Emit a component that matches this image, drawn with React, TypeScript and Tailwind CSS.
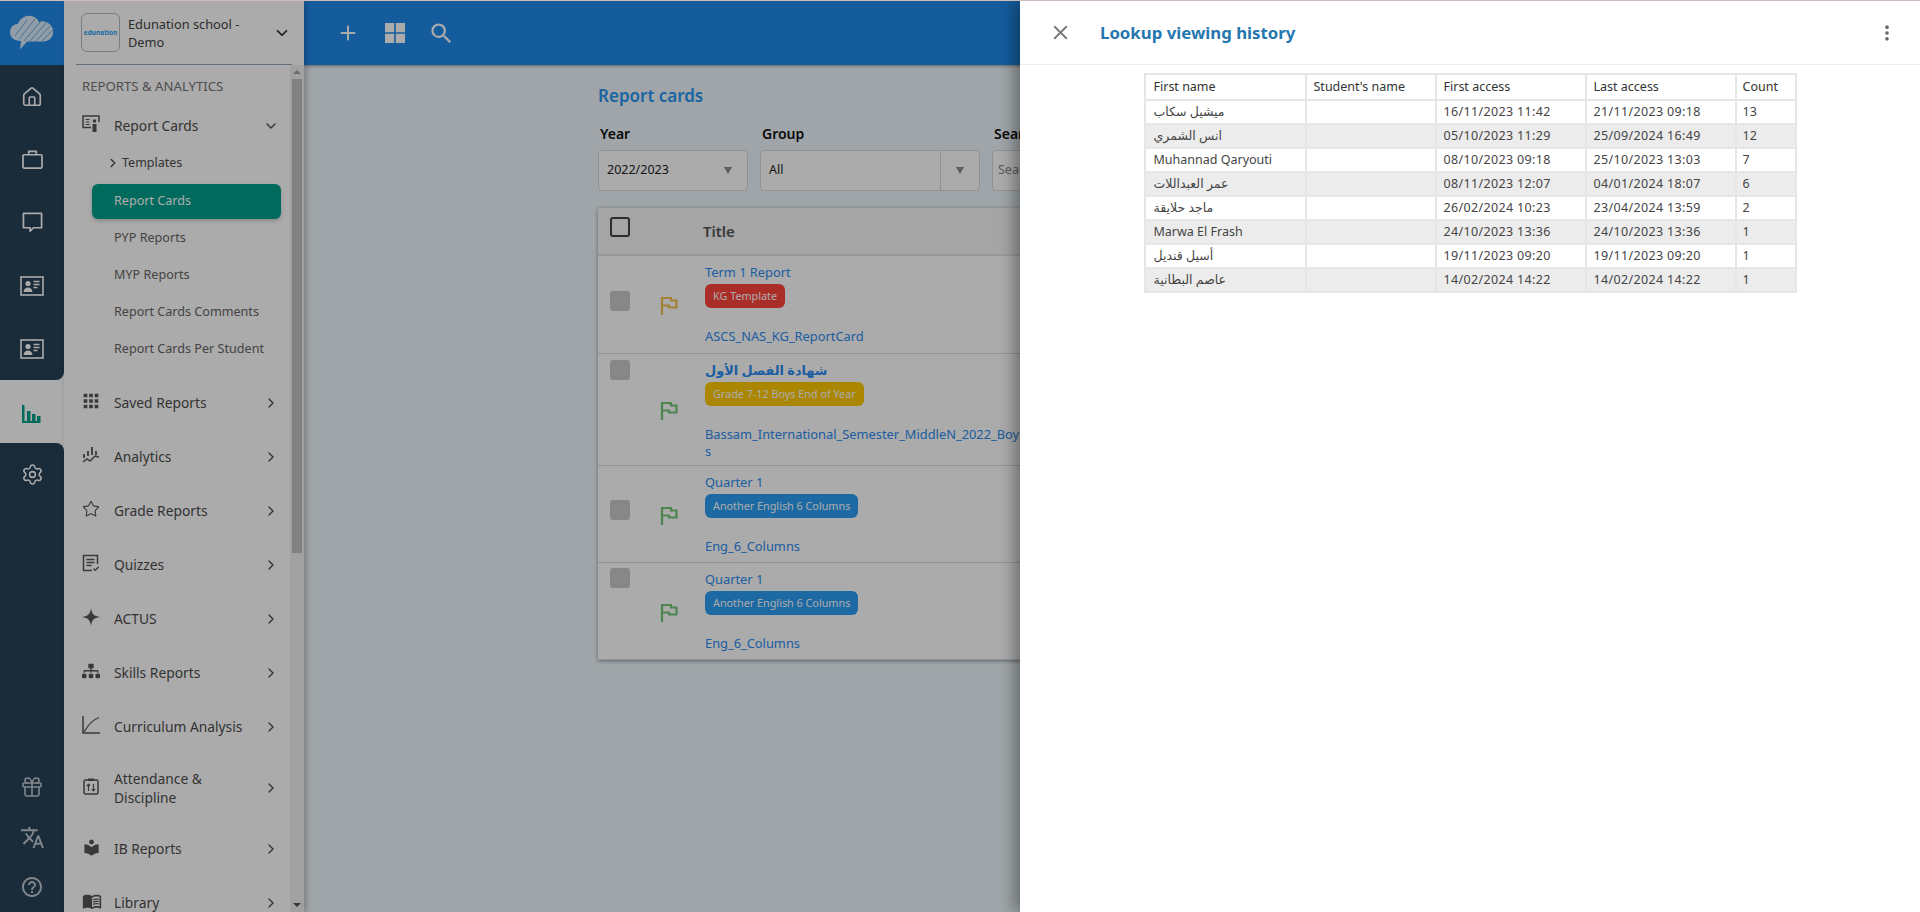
import { ChevronDown, ChevronRight, Plus, X, EllipsisVertical, House, Settings, Gift, Star } from "lucide-react";
import { MdTranslate, MdHelpOutline, MdApps, MdLocalLibrary, MdMenuBook, MdSearch } from "react-icons/md";
import { FaSitemap } from "react-icons/fa";
import type { ReactNode } from "react";

const font = "font-['Noto_Sans','DejaVu_Sans',sans-serif]";

function IdCard({ className }: { className?: string }) {
  return (
    <svg viewBox="0 0 24 20" className={className} fill="none">
      <rect x="1" y="1" width="22" height="18" stroke="currentColor" strokeWidth="1.6" />
      <circle cx="8" cy="7.5" r="2.6" fill="currentColor" />
      <path d="M3.5 16c.3-3 2-4.500 4.500-4.500s4.200 1.500 4.500 4.500z" fill="currentColor" />
      <path d="M13.500 5.500h6M13.500 8.500h6M13.500 11.500h4" stroke="currentColor" strokeWidth="1.300" />
    </svg>
  );
}

function CaseIcon({ className }: { className?: string }) {
  return (
    <svg viewBox="0 0 22 20" className={className} fill="none">
      <rect x="1" y="5" width="20" height="14" rx="1" stroke="currentColor" strokeWidth="1.800" />
      <path d="M7 5V1.500h8V5" stroke="currentColor" strokeWidth="1.800" />
    </svg>
  );
}

function ChatIcon({ className }: { className?: string }) {
  return (
    <svg viewBox="0 0 22 22" className={className} fill="none">
      <path d="M1.500 1.500h19v15H12l-3.500 3.500v-3.500h-7z" stroke="currentColor" strokeWidth="1.800" strokeLinejoin="round" />
    </svg>
  );
}

function HomeIcon({ className }: { className?: string }) {
  return <House className={className} strokeWidth={1.8} />;
}

function CloudLogo() {
  return (
    <svg viewBox="0 0 46 38" className="h-[38px] w-[46px]" fill="none">
      <path d="M12 27C5 27 1 23 1 18c0-5 4-8 8-8 2-6 8-9 13-8 4 .7 7 3 8 6 2-1 5-1 8 .5 4 2 7 6 6 11-.8 5-5 8-10 8H18l-7 8 1-8z" fill="#d9ecfb" />
      <path d="M6 22 18 6M10 25 26 5M15 27 32 7M21 27 37 9M27 27 41 12M33 27 44 16" stroke="#6fa8d8" strokeWidth="1" />
    </svg>
  );
}

function FlagIcon({ className }: { className?: string }) {
  return (
    <svg viewBox="0 0 18 19" className={className} fill="none">
      <path d="M2 19V2h9v2.500h5.500v7H9V9.500H2" stroke="currentColor" strokeWidth="2.200" />
    </svg>
  );
}

function ReportIcon() {
  return (
    <svg viewBox="0 0 18 18" className="h-[18px] w-[18px]" fill="none">
      <path d="M9 12.500H1V1h16v6" stroke="currentColor" strokeWidth="1.500" />
      <path d="M3.500 4.500h4M3.500 7h4M3.500 9.500h4" stroke="currentColor" strokeWidth="1.200" />
      <circle cx="12.500" cy="6" r="1.800" fill="currentColor" />
      <rect x="10.500" y="9" width="4" height="8" fill="currentColor" />
    </svg>
  );
}

function AnalyticsIcon() {
  return (
    <svg viewBox="0 0 18 18" className="h-[18px] w-[18px]" fill="none">
      <path d="M2 8v4M6 5v5M10 1v8M14 5v4" stroke="currentColor" strokeWidth="1.800" />
      <path d="M1 16l4-3 3 2 5-5 4 1" stroke="currentColor" strokeWidth="1.500" />
    </svg>
  );
}

function QuizIcon() {
  return (
    <svg viewBox="0 0 18 18" className="h-[18px] w-[18px]" fill="none">
      <path d="M10 16.500H1.500v-15h14V10" stroke="currentColor" strokeWidth="1.500" />
      <path d="M4.500 5.500h8M4.500 8.500h8M4.500 11.500h5" stroke="currentColor" strokeWidth="1.300" />
      <path d="M11.500 14.500l1.800 1.800 3.500-3.500" stroke="currentColor" strokeWidth="1.300" />
    </svg>
  );
}

function SparkIcon() {
  return (
    <svg viewBox="0 0 18 18" className="h-[18px] w-[18px]">
      <path d="M9 0c.6 5.500 2.500 8 9 9-6.500 1-8.400 3.500-9 9-.6-5.500-2.500-8-9-9 6.500-1 8.400-3.500 9-9z" fill="currentColor" />
    </svg>
  );
}

function CurveIcon() {
  return (
    <svg viewBox="0 0 18 18" className="h-[18px] w-[18px]" fill="none">
      <path d="M1 0v17h17" stroke="currentColor" strokeWidth="1.500" />
      <path d="M2 16C6 9 10 4 17 1.500" stroke="currentColor" strokeWidth="1.300" />
    </svg>
  );
}

function ClipIcon() {
  return (
    <svg viewBox="0 0 18 18" className="h-[18px] w-[18px]" fill="none">
      <rect x="2" y="3" width="14" height="14" rx="1.500" stroke="currentColor" strokeWidth="1.500" />
      <path d="M6 1.500h6V4H6z" fill="currentColor" />
      <path d="M6.500 14V7M4.800 8.800l1.700-1.800 1.700 1.800M11.500 7v7M9.800 12.200l1.700 1.800 1.700-1.800" stroke="currentColor" strokeWidth="1.200" />
    </svg>
  );
}

const topItems = [
  { Icon: HomeIcon, size: "h-[22px] w-[22px]" },
  { Icon: CaseIcon, size: "h-[19px] w-[21px]" },
  { Icon: ChatIcon, size: "h-[21px] w-[21px]" },
  { Icon: IdCard, size: "h-[20px] w-[24px]" },
  { Icon: IdCard, size: "h-[20px] w-[24px]" },
];

const navGroups: { label: ReactNode; icon: ReactNode; tall?: boolean }[] = [
  { label: "Saved Reports", icon: <MdApps size={22} className="-ml-0.5" /> },
  { label: "Analytics", icon: <AnalyticsIcon /> },
  { label: "Grade Reports", icon: <Star size={18} strokeWidth={1.5} /> },
  { label: "Quizzes", icon: <QuizIcon /> },
  { label: "ACTUS", icon: <SparkIcon /> },
  { label: "Skills Reports", icon: <FaSitemap size={18} /> },
  { label: "Curriculum Analysis", icon: <CurveIcon /> },
  { label: <>Attendance &amp;<br />Discipline</>, icon: <ClipIcon />, tall: true },
  { label: "IB Reports", icon: <MdLocalLibrary size={19} /> },
  { label: "Library", icon: <MdMenuBook size={20} /> },
];

const subItems = ["PYP Reports", "MYP Reports", "Report Cards Comments", "Report Cards Per Student"];

const cards = [
  { title: "Term 1 Report", tag: "KG Template", tagClass: "bg-[#ff433c]", file: "ASCS_NAS_KG_ReportCard", flag: "text-[#f2c14e]", box: "mt-[35px]", h: "h-[98px]" },
  { title: "شهادة الفصل الأول", tag: "Grade 7-12 Boys End of Year", tagClass: "bg-[#ffc800]", file: "Bassam_International_Semester_MiddleN_2022_Boys", flag: "text-[#74c67a]", box: "mt-[6px]", h: "h-[112px]" },
  { title: "Quarter 1", tag: "Another English 6 Columns", tagClass: "bg-[#2a9df4]", file: "Eng_6_Columns", flag: "text-[#74c67a]", box: "mt-[34px]", h: "h-[97px]" },
  { title: "Quarter 1", tag: "Another English 6 Columns", tagClass: "bg-[#2a9df4]", file: "Eng_6_Columns", flag: "text-[#74c67a]", box: "mt-[5px]", h: "h-[97px]" },
];

const history = [
  ["ميشيل سكاب", "16/11/2023 11:42", "21/11/2023 09:18", "13"],
  ["انس الشمري", "05/10/2023 11:29", "25/09/2024 16:49", "12"],
  ["Muhannad Qaryouti", "08/10/2023 09:18", "25/10/2023 13:03", "7"],
  ["عمر العبداللات", "08/11/2023 12:07", "04/01/2024 18:07", "6"],
  ["ماجد حلايقة", "26/02/2024 10:23", "23/04/2024 13:59", "2"],
  ["Marwa El Frash", "24/10/2023 13:36", "24/10/2023 13:36", "1"],
  ["أسيل قنديل", "19/11/2023 09:20", "19/11/2023 09:20", "1"],
  ["عاصم البطانية", "14/02/2024 14:22", "14/02/2024 14:22", "1"],
];

function Rail() {
  return (
    <div className="flex w-16 shrink-0 flex-col bg-white">
      <div className="flex h-16 items-center justify-center bg-[#208aea]">
        <CloudLogo />
      </div>
      <div className="rounded-br-lg bg-[#274057] text-white">
        {topItems.map(({ Icon, size }, i) => (
          <div key={i} className="flex h-[63px] items-center justify-center">
            <Icon className={size} />
          </div>
        ))}
      </div>
      <div className="flex h-[63px] items-end justify-center pb-[20px] text-[#00a08a]">
        <svg viewBox="0 0 22 18" className="h-[18px] w-[22px]">
          <path d="M1 0h2.500v16H6V6h3.500v10H11V9h3.500v7H16v-5h3.500v7H1z" fill="currentColor" />
        </svg>
      </div>
      <div className="flex flex-1 flex-col items-center rounded-tr-lg bg-[#274057] text-white">
        <div className="flex h-[63px] items-center justify-center">
          <Settings size={23} strokeWidth={1.6} />
        </div>
        <div className="mt-auto flex flex-col text-[#bfc8d0]">
          <div className="flex h-[50px] items-center justify-center"><Gift size={24} strokeWidth={1.6} /></div>
          <div className="flex h-[50px] items-center justify-center"><MdTranslate size={25} /></div>
          <div className="flex h-[50px] items-center justify-center"><MdHelpOutline size={24} /></div>
        </div>
      </div>
    </div>
  );
}

function Sidebar() {
  return (
    <div className="z-10 flex w-[240px] shrink-0 flex-col overflow-hidden bg-white shadow-[2px_0_6px_rgba(0,0,0,0.25)]">
      <div className="mx-3 flex h-16 shrink-0 items-center border-b border-[#94a8b8] pl-[5px]">
        <div className="flex h-[39px] w-[39px] items-center justify-center rounded-md border border-[#b0bcc4] text-[6.500px] font-bold text-[#2a9df4]">edunation</div>
        <div className="ml-2 w-[125px] text-[12.800px] leading-[18px] text-[#444]">Edunation school - Demo</div>
        <ChevronDown size={18} strokeWidth={2.2} className="ml-[20px] text-[#222]" />
      </div>
      <div className="flex min-h-0 flex-1">
        <div className="min-w-0 flex-1 text-[#4d4d4d]">
          <div className="flex h-[44px] items-center pl-[18px] text-[13.200px] text-[#757575]">REPORTS &amp; ANALYTICS</div>
          <div className="flex h-[34px] items-center pl-[18px] text-[13.800px]">
            <span className="-mt-1 w-[32px] text-[#555]"><ReportIcon /></span>
            <span className="flex-1">Report Cards</span>
            <ChevronDown size={16} className="mr-[11px]" />
          </div>
          <div className="flex h-[40px] items-center pl-[42px] text-[12.500px]">
            <ChevronRight size={14} strokeWidth={2.400} className="mr-[2px]" />
            Templates
          </div>
          <div className="flex h-[37px] items-center pl-[28px]">
            <div className="flex h-[35px] w-[189px] items-center rounded-md bg-[#00a08a] pl-[22px] text-[12.600px] text-white shadow-[0_2px_4px_rgba(0,0,0,0.2)]">Report Cards</div>
          </div>
          {subItems.map((s) => (
            <div key={s} className="flex h-[37px] items-center pl-[50px] text-[12.600px] text-[#666]">{s}</div>
          ))}
          <div className="h-[8px]" />
          {navGroups.map((g, i) => (
            <div key={i} className={`flex items-center pl-[18px] text-[13.800px] ${g.tall ? "h-[68px] leading-[19px]" : "h-[54px]"}`}>
              <span className="-mt-1 flex w-[32px] text-[#555]">{g.icon}</span>
              <span className="flex-1">{g.label}</span>
              <ChevronRight size={16} className="mr-[11px]" />
            </div>
          ))}
        </div>
        <div className="flex w-[14px] shrink-0 flex-col items-center bg-[#f1f1f1]">
          <div className="mt-[5px] h-0 w-0 border-x-[4px] border-b-[4px] border-x-transparent border-b-[#a3a3a3]" />
          <div className="mt-[5px] h-[474px] w-[10px] bg-[#c1c1c1]" />
          <div className="mt-auto mb-[5px] h-0 w-0 border-x-[4px] border-t-[4px] border-x-transparent border-t-[#505050]" />
        </div>
      </div>
    </div>
  );
}

function Main() {
  return (
    <div className="min-w-0 flex-1 overflow-hidden bg-[#eef6fb]">
      <div className="flex h-16 items-center bg-[#208aea] pl-[33px] text-white shadow-[0_1px_3px_rgba(0,0,0,0.4)]">
        <Plus size={22} strokeWidth={2.2} />
        <svg viewBox="0 0 20 20" className="ml-[26px] h-[20px] w-[20px]">
          <path d="M0 0h9.200v9.200H0zM10.800 0H20v9.200h-9.200zM0 10.800h9.200V20H0zM10.800 10.800H20V20h-9.200z" fill="currentColor" />
        </svg>
        <MdSearch size={27} className="ml-[23px]" />
      </div>
      <div className="w-[1000px] pl-[294px]">
        <h1 className="mt-[19px] text-[17px] leading-6 font-semibold text-[#2796f5]">Report cards</h1>
        <div className="mt-[16px] flex gap-3">
          <div className="w-[150px]">
            <div className="pl-0.5 text-[14px] leading-5 font-semibold text-[#111]">Year</div>
            <div className="mt-[6px] flex h-[41px] items-center justify-between rounded border border-[#d8d8d8] bg-white pr-[15px] pl-2 text-[12.500px] text-[#222]">
              2022/2023
              <span className="h-0 w-0 border-x-[4px] border-t-[7px] border-x-transparent border-t-[#888]" />
            </div>
          </div>
          <div className="w-[220px]">
            <div className="pl-0.5 text-[14px] leading-5 font-semibold text-[#111]">Group</div>
            <div className="mt-[6px] flex h-[41px] items-center rounded border border-[#d8d8d8] bg-white pl-2 text-[12.500px] text-[#222]">
              <span className="flex-1">All</span>
              <span className="flex h-full w-[39px] items-center justify-center border-l border-[#d8d8d8]">
                <span className="h-0 w-0 border-x-[4px] border-t-[7px] border-x-transparent border-t-[#888]" />
              </span>
            </div>
          </div>
          <div className="w-[220px]">
            <div className="pl-0.5 text-[14px] leading-5 font-semibold text-[#111]">Search</div>
            <div className="mt-[6px] flex h-[41px] items-center rounded border border-[#d8d8d8] bg-white pl-[5px] text-[12.500px] text-[#888]">Search</div>
          </div>
        </div>
        <div className="mt-[17px] w-[700px] bg-white shadow-[0_1px_4px_rgba(0,0,0,0.4)]">
          <div className="flex h-12 border-b-2 border-[#e4e4e4] bg-[#f6f6f6]">
            <div className="mt-[9px] ml-[12px] h-[20px] w-[20px] rounded-[3px] border-2 border-[#444]" />
            <div className="ml-[73px] self-center text-[15px] font-semibold text-[#555]">Title</div>
          </div>
          {cards.map((c, i) => (
            <div key={i} className={`flex border-b border-[#dcdcdc] ${c.h}`}>
              <div className={`ml-[12px] h-[20px] w-[20px] shrink-0 rounded-[3px] bg-[#c9c9c9] ${c.box}`} />
              <FlagIcon className={`mt-[2px] ml-[30px] h-[19px] w-[18px] shrink-0 self-center ${c.flag}`} />
              <div className="ml-[27px] w-[318px] break-all pt-[8px] text-[12.850px] text-[#2b8cf0]">
                <div className={`leading-4 ${i === 1 ? "font-bold" : ""}`}>{c.title}</div>
                <div className={`mt-[4px] block h-6 w-fit rounded-md px-2 text-[10.800px] leading-6 whitespace-nowrap text-white ${c.tagClass}`}>{c.tag}</div>
                <div className="mt-[20px] leading-[17px]">{c.file}</div>
              </div>
            </div>
          ))}
        </div>
      </div>
    </div>
  );
}

function Drawer() {
  return (
    <div className="absolute top-0 right-0 bottom-0 z-30 w-[900px] bg-white shadow-[-6px_0_14px_rgba(0,0,0,0.35)]">
      <div className="flex h-16 items-center border-b border-[#eeeeee] pr-6 pl-[29px]">
        <X size={23} strokeWidth={1.900} className="text-[#777]" />
        <h2 className="ml-[28px] flex-1 text-[16.800px] font-bold text-[#2677b0]">Lookup viewing history</h2>
        <EllipsisVertical size={20} strokeWidth={2.400} className="-mr-[1px] text-[#666]" />
      </div>
      <table className="mx-auto mt-2 w-[653px] table-fixed border-collapse text-[12.500px] text-[#444]">
        <thead>
          <tr className="h-[26px] text-[#333]">
            <th className="w-[161px] border-2 border-[#e6e6e6] pl-2 text-left font-normal">First name</th>
            <th className="w-[130px] border-2 border-[#e6e6e6] pl-[7px] text-left font-normal">Student's name</th>
            <th className="w-[150px] border-2 border-[#e6e6e6] pl-[7px] text-left font-normal">First access</th>
            <th className="w-[150px] border-2 border-[#e6e6e6] pl-[7px] text-left font-normal">Last access</th>
            <th className="border-2 border-[#e6e6e6] pl-[6px] text-left font-normal">Count</th>
          </tr>
        </thead>
        <tbody>
          {history.map((r, i) => (
            <tr key={i} className={`h-6 ${i % 2 === 1 ? "bg-[#ececec]" : ""}`}>
              <td className="border-x-2 border-b-2 border-[#e6e6e6] pl-2">{r[0]}</td>
              <td className="border-x-2 border-b-2 border-[#e6e6e6]" />
              <td className="border-x-2 border-b-2 border-[#e6e6e6] pl-[7px] tracking-[0.35px]">{r[1]}</td>
              <td className="border-x-2 border-b-2 border-[#e6e6e6] pl-[7px] tracking-[0.35px]">{r[2]}</td>
              <td className="border-x-2 border-b-2 border-[#e6e6e6] pl-[6px]">{r[3]}</td>
            </tr>
          ))}
        </tbody>
      </table>
    </div>
  );
}

export default function App() {
  return (
    <div className={`relative flex h-[912px] flex-col overflow-hidden ${font}`}>
      <div className="relative z-40 h-px shrink-0 bg-[#cdbdb8]" />
      <div className="relative flex min-h-0 flex-1">
        <Rail />
        <Sidebar />
        <Main />
        <div className="absolute inset-0 z-20 bg-black/33" />
        <Drawer />
      </div>
    </div>
  );
}
